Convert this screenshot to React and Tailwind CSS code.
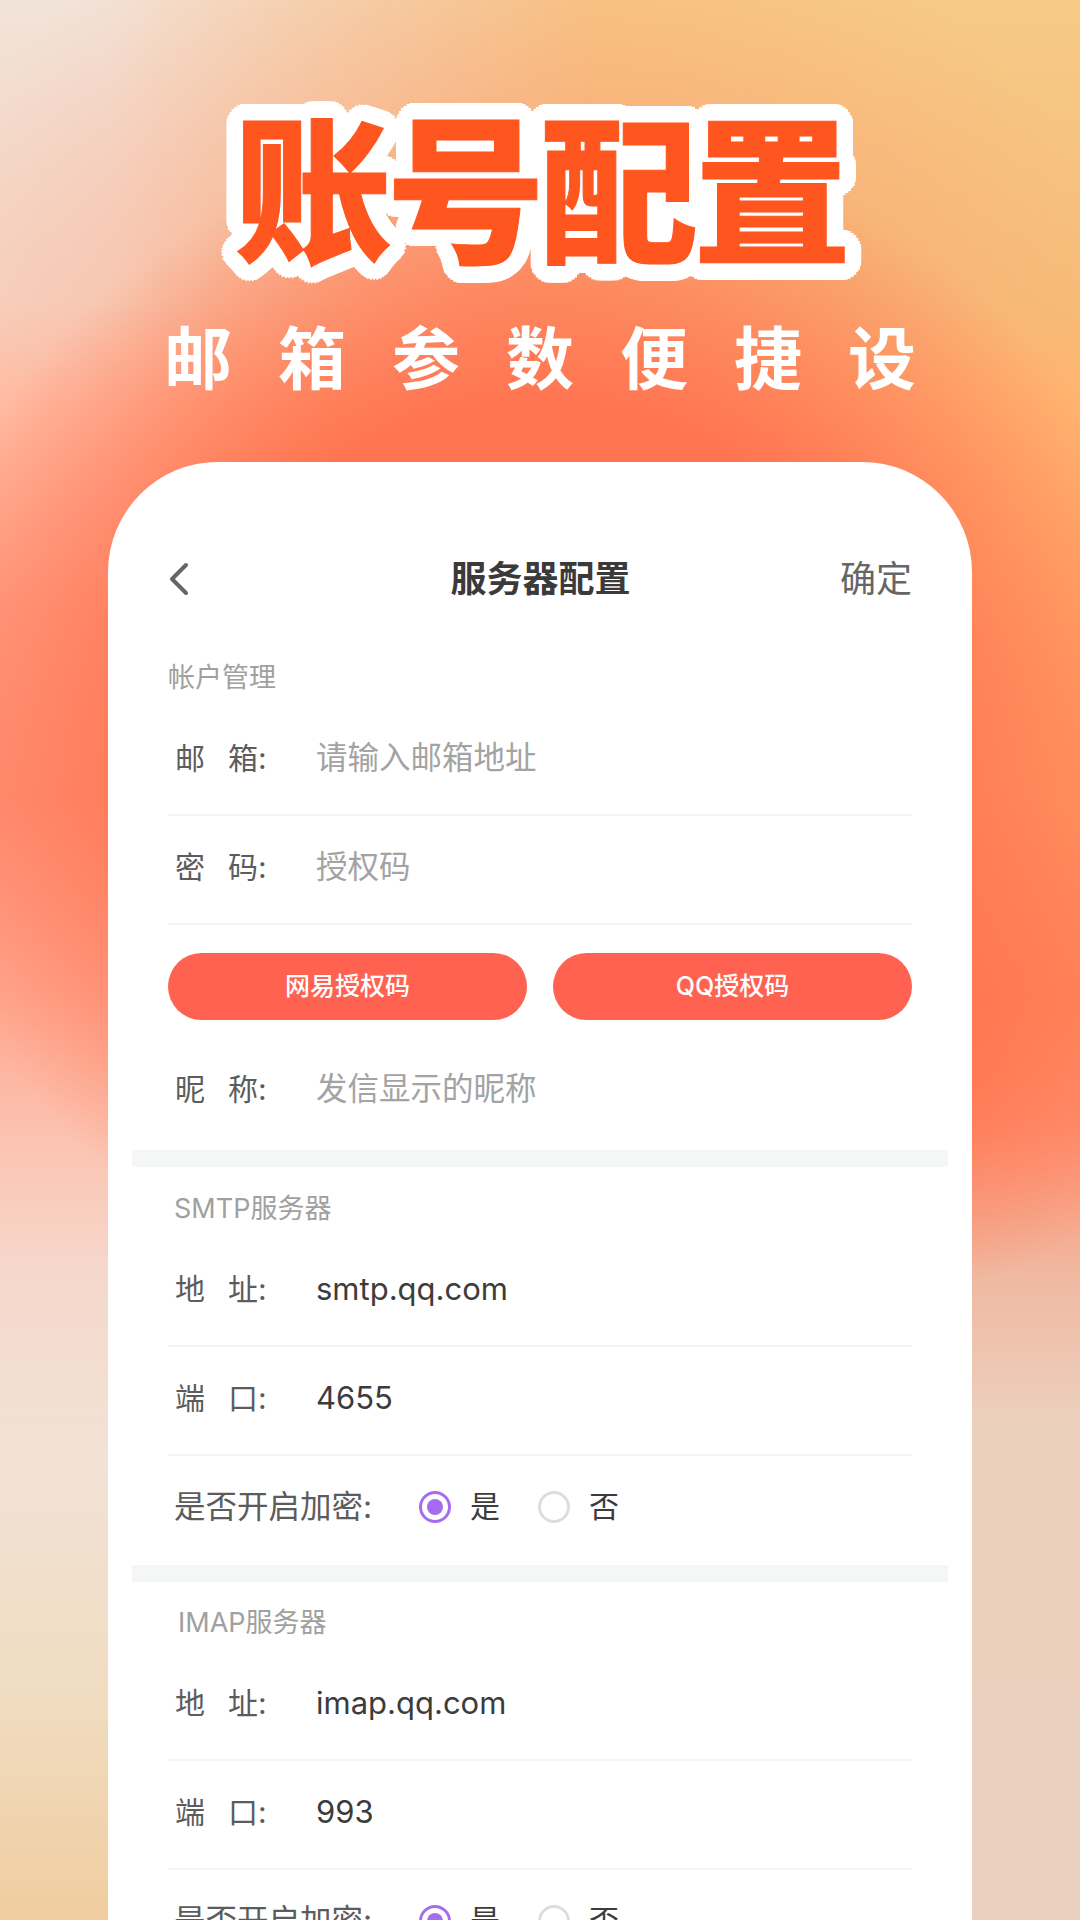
import React from 'react';

const FormRow = ({ label, children, last }) => (
  <div className={`flex items-center ${last ? 'h-[130px] pt-[8px]' : 'h-[109px] pb-[5px] border-b-2 border-[#f4f4f4]'}`}>
    <div className="w-[148px] pl-[7px] flex items-center text-[30px] text-[#5c5c5c]">
      <span className="w-[53px]">{label[0]}</span>
      <span>{label[1]}:</span>
    </div>
    {children}
  </div>
);

const Radio = ({ checked, label }) => (
  <div className="flex items-center gap-[19px]">
    <span
      className={`w-[32px] h-[32px] rounded-full border-[3px] flex items-center justify-center ${
        checked ? 'border-[#a56cf2]' : 'border-[#dddde1]'
      }`}
    >
      {checked && <span className="w-[16px] h-[16px] rounded-full bg-[#a56cf2]" />}
    </span>
    <span className="text-[30px] text-[#3c3c3c]">{label}</span>
  </div>
);

const EncryptRow = () => (
  <div className="flex items-center h-[109px] pb-[8px] pl-[6px]">
    <span className="w-[245px] text-[31.5px] text-[#5c5c5c]">是否开启加密:</span>
    <div className="flex items-center gap-[38px]">
      <Radio checked label="是" />
      <Radio label="否" />
    </div>
  </div>
);

const Band = () => <div className="h-[17px] mx-[24px] bg-[#f5f7f7]" />;

const SectionLabel = ({ children, className }) => (
  <div className={`text-[27px] leading-[36px] text-[#a0a0a0] ${className}`}>{children}</div>
);

const App = () => {
  return (
    <div className='relative w-[1080px] h-[1920px] overflow-hidden flex flex-col font-["Inter","Noto_Sans_CJK_SC",sans-serif] bg-[linear-gradient(180deg,#f6ca88_0px,#f6bd78_300px,#ffb570_400px,#ffa868_600px,#ff9860_800px,#ff8a5c_1000px,#ff9070_1127px,#f0b8a0_1273px,#ebcfbd_1418px,#e9d0be_1920px)] before:absolute before:inset-0 before:bg-[linear-gradient(180deg,#f2e3d8_0px,#f5d6c4_300px,#ffc0a8_400px,#ff9f85_600px,#ff9278_800px,#ffa891_1000px,#fbc5b3_1150px,#f5d8cc_1273px,#f2e2d6_1467px,#f0dcc0_1700px,#f0cda0_1920px)] before:[mask-image:linear-gradient(90deg,#000_0%,#000_10%,transparent_55%)] after:absolute after:inset-0 after:bg-[radial-gradient(ellipse_640px_600px_at_540px_730px,#ff7552_0%,#ff7552_55%,#ff755200_100%),radial-gradient(ellipse_300px_260px_at_900px_1030px,#ff7550_0%,#ff755000_100%),radial-gradient(ellipse_620px_420px_at_500px_300px,#ff8a6a88_0%,#ff8a6a00_100%)]'>
      {/* Hero */}
      <div className="relative z-10 h-[462px] flex flex-col items-center shrink-0">
        <h1 className='mt-[88px] h-[190px] text-[158px] leading-[190px] font-black tracking-[-5px] text-[#ff551e] font-["Noto_Sans_CJK_SC",sans-serif] [-webkit-text-stroke:1px_#ff551e] [text-shadow:17px_0_0_#fff,16.7px_3.3px_0_#fff,15.7px_6.5px_0_#fff,14.1px_9.4px_0_#fff,12px_12px_0_#fff,9.4px_14.1px_0_#fff,6.5px_15.7px_0_#fff,3.3px_16.7px_0_#fff,0_17px_0_#fff,-3.3px_16.7px_0_#fff,-6.5px_15.7px_0_#fff,-9.4px_14.1px_0_#fff,-12px_12px_0_#fff,-14.1px_9.4px_0_#fff,-15.7px_6.5px_0_#fff,-16.7px_3.3px_0_#fff,-17px_0_0_#fff,-16.7px_-3.3px_0_#fff,-15.7px_-6.5px_0_#fff,-14.1px_-9.4px_0_#fff,-12px_-12px_0_#fff,-9.4px_-14.1px_0_#fff,-6.5px_-15.7px_0_#fff,-3.3px_-16.7px_0_#fff,0_-17px_0_#fff,3.3px_-16.7px_0_#fff,6.5px_-15.7px_0_#fff,9.4px_-14.1px_0_#fff,12px_-12px_0_#fff,14.1px_-9.4px_0_#fff,15.7px_-6.5px_0_#fff,16.7px_-3.3px_0_#fff,8px_0_0_#fff,5.7px_5.7px_0_#fff,0_8px_0_#fff,-5.7px_5.7px_0_#fff,-8px_0_0_#fff,-5.7px_-5.7px_0_#fff,0_-8px_0_#fff,5.7px_-5.7px_0_#fff]'>
          账号配置
        </h1>
        <p className='mt-[32px] pl-[46px] text-[68px] leading-[90px] font-semibold tracking-[46px] text-white font-["Noto_Sans_CJK_SC",sans-serif]'>
          邮箱参数便捷设
        </p>
      </div>

      {/* Phone card */}
      <div className="relative z-10 ml-[108px] w-[864px] grow bg-white rounded-t-[110px]">
        <div className="flex items-center justify-between h-[72px] mt-[81px] px-[60px]">
          <svg width="24" height="34" viewBox="0 0 24 34" fill="none" className="ml-[-1px]">
            <path d="M19 3 5 17l14 14" stroke="#666" strokeWidth="4" strokeLinecap="round" strokeLinejoin="round" />
          </svg>
          <span className="ml-[50px] text-[36px] font-bold text-[#3a3a3a]">服务器配置</span>
          <span className="text-[36px] text-[#666]">确定</span>
        </div>

        <div className="px-[60px]">
          <SectionLabel className="mt-[45px] mb-[11px]">帐户管理</SectionLabel>
          <FormRow label="邮箱">
            <span className="text-[31.5px] text-[#a3a3a3]">请输入邮箱地址</span>
          </FormRow>
          <FormRow label="密码">
            <span className="text-[31.5px] text-[#a3a3a3]">授权码</span>
          </FormRow>
          <div className="flex gap-[26px] mt-[28px]">
            <div className="flex-1 h-[67px] rounded-full bg-[#ff6250] flex items-center justify-center text-[25px] font-medium text-white">
              网易授权码
            </div>
            <div className="flex-1 h-[67px] rounded-full bg-[#ff6250] flex items-center justify-center text-[25px] font-medium text-white">
              QQ授权码
            </div>
          </div>
          <FormRow label="昵称" last>
            <span className="text-[31.5px] text-[#a3a3a3]">发信显示的昵称</span>
          </FormRow>
        </div>

        <Band />

        <div className="px-[60px]">
          <SectionLabel className="pl-[6px] mt-[24px] mb-[11px]">SMTP服务器</SectionLabel>
          <FormRow label="地址">
            <span className="text-[31px] text-[#3c3c3c]">smtp.qq.com</span>
          </FormRow>
          <FormRow label="端口">
            <span className="text-[31px] text-[#3c3c3c]">4655</span>
          </FormRow>
          <EncryptRow />
        </div>

        <Band />

        <div className="px-[60px]">
          <SectionLabel className="pl-[10px] mt-[23px] mb-[11px]">IMAP服务器</SectionLabel>
          <FormRow label="地址">
            <span className="text-[31px] text-[#3c3c3c]">imap.qq.com</span>
          </FormRow>
          <FormRow label="端口">
            <span className="text-[31px] text-[#3c3c3c]">993</span>
          </FormRow>
          <EncryptRow />
        </div>
      </div>
    </div>
  );
};

export default App;
